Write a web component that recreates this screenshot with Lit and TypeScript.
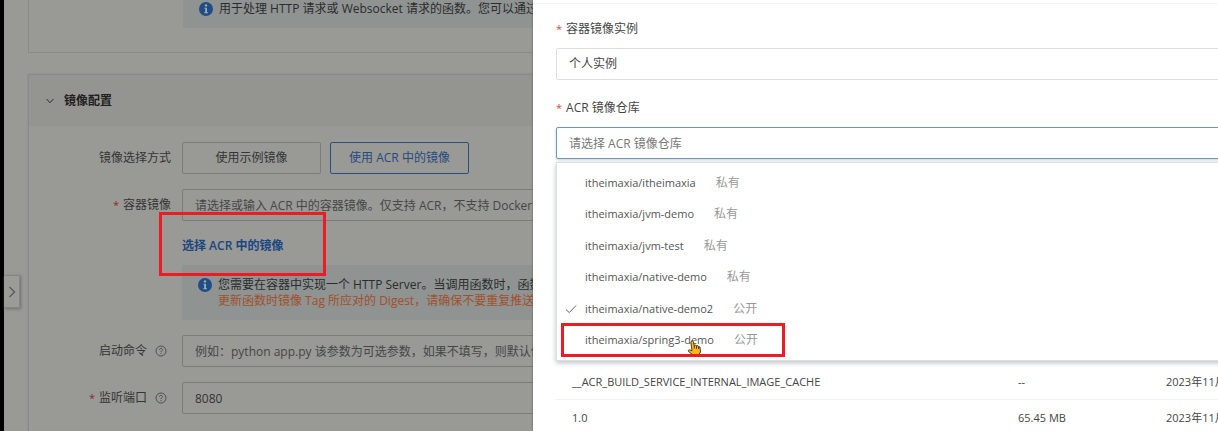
import { LitElement, html, css } from "lit";
import { customElement, state } from "lit/decorators.js";
import { classMap } from "lit/directives/class-map.js";

const infoIcon = html`<svg class="info" viewBox="0 0 14 14" aria-hidden="true">
  <circle cx="7" cy="7" r="7" fill="#1f4e86" />
  <circle cx="7" cy="3.4" r="1.2" fill="#a3a8ab" />
  <path d="M5.3 5.7H8V10.3H9V11.2H5.2V10.3H6.2V6.6H5.3Z" fill="#a3a8ab" />
</svg>`;

const helpIcon = html`<svg class="help" viewBox="0 0 12 12" aria-hidden="true">
  <circle cx="6" cy="6" r="5" fill="none" stroke="#4a4a49" stroke-width=".9" />
  <path d="M4.5 4.9C4.5 3.9 5.1 3.4 6 3.4S7.5 3.9 7.5 4.7C7.5 5.6 6 5.8 6 7" fill="none" stroke="#4a4a49" stroke-width=".9" />
  <rect x="5.5" y="7.9" width="1" height="1" fill="#4a4a49" />
</svg>`;

interface Repo {
  name: string;
  access: string;
}

@customElement("app-root")
export class AppRoot extends LitElement {
  @state() private selected = "itheimaxia/native-demo2";

  private repos: Repo[] = [
    { name: "itheimaxia/itheimaxia", access: "私有" },
    { name: "itheimaxia/jvm-demo", access: "私有" },
    { name: "itheimaxia/jvm-test", access: "私有" },
    { name: "itheimaxia/native-demo", access: "私有" },
    { name: "itheimaxia/native-demo2", access: "公开" },
    { name: "itheimaxia/spring3-demo", access: "公开" },
  ];

  private tags = [
    ["__ACR_BUILD_SERVICE_INTERNAL_IMAGE_CACHE", "--", "2023年11月"],
    ["1.0", "65.45 MB", "2023年11月"],
  ];

  static styles = css`
    :host {
      display: block;
      position: relative;
      height: 100vh;
      overflow: hidden;
      background: #999996;
      color: #333534;
      font: 12px/16px "Open Sans", "Noto Sans CJK SC", sans-serif;
    }
    * { box-sizing: border-box; }
    button, input, select { font: inherit; color: inherit; margin: 0; border-radius: 2px; }
    .page { border-left: 4px solid #000; padding-left: 24px; min-height: 100%; white-space: nowrap; }
    .card { border: 1px solid #8a8a88; border-right: 0; }
    .first { border-top: 0; padding: 0 0 24px 154px; margin-bottom: 21px; }
    .second { height: 400px; box-shadow: 0 0 2px #8a8a88; }
    .tip { display: flex; gap: 6px; padding: 12px 16px 11px; background: #8f9392; overflow: hidden; color: #2a2c2c; }
    .first .tip { padding-top: 1px; }
    .tip p { margin: 0; }
    .warn { color: #a1502a; }
    .info { width: 14px; height: 14px; margin-top: 1px; flex: none; }
    .head { display: flex; align-items: center; gap: 9px; height: 51px; padding-left: 16px; background: #949491; }
    .head h2 { margin: 0; font-size: 12px; line-height: 16px; font-weight: 700; color: #1f2020; }
    .chev { width: 10px; height: 10px; }
    .form { display: grid; grid-template-columns: 142px 1fr; column-gap: 11px; padding-top: 16px; row-gap: 15px; }
    .form label, .form .label { display: flex; justify-content: flex-end; align-items: center; height: 32px; gap: 4px; }
    .help { width: 12px; height: 12px; margin: 0 4px 0 4px; }
    .req { color: #8d2a24; font-size: 11px; }
    .form input { width: 100%; height: 32px; padding: 0 12px; background: transparent; border: 1px solid #7c7c7a; }
    .form input::placeholder { color: #454746; opacity: 1; }
    .modes { display: flex; gap: 9px; }
    .modes button { width: 139px; height: 32px; background: transparent; border: 1px solid #7c7c7a; }
    .modes .on { border-color: #2d4f80; color: #264a80; }
    .wide { grid-column: 2; }
    .link { display: block; padding: 2px 0 11px; color: #1b4680; font-weight: 600; text-decoration: none; }
    .handle {
      position: absolute; left: 4px; top: 275px; width: 16px; height: 33px; padding: 0;
      display: grid; place-items: center; background: #9b9b98; border: 1px solid #858583; border-left: 0;
      border-radius: 0; box-shadow: 1px 1px 3px #6f6f6d;
    }
    .handle svg { width: 10px; height: 12px; }
    .drawer {
      position: absolute; inset: 0 0 0 533px; overflow: hidden; background: #fff; color: #454545;
      box-shadow: 0 0 2px #555; padding-top: 3px;
    }
    .body { border-top: 1px solid #f2f2f2; padding: 17px 0 0 23px; }
    .field { display: block; }
    .field .cap { display: flex; gap: 4px; height: 16px; margin-bottom: 11px; }
    .drawer .req { color: #c8504a; }
    .field select, .field input {
      display: block; appearance: none; width: calc(100% + 8px); height: 32px; padding: 0 12px; background: #fff;
      border: 1px solid #dedede; outline: 0;
    }
    .field + .combo { margin-top: 20px; }
    .combo { position: relative; }
    .field input { border-color: #6f96bd; box-shadow: 0 1px 3px #c5d4e4; }
    .field input::placeholder { color: #777; opacity: 1; }
    .menu {
      position: absolute; top: 62px; left: 0; width: calc(100% + 8px); height: 199px; margin: 0; padding: 4px 0;
      list-style: none; display: grid; grid-template-rows: repeat(6, 1fr); background: #fff;
      border: 1px solid #dedede; box-shadow: 0 2px 5px #bcc4c4;
    }
    .menu li { display: grid; grid-template-columns: 20px auto auto; justify-content: start; align-items: center; padding-left: 8px; color: #555; }
    .name { font-size: 11px; }
    .menu .access { color: #999; margin-left: 20px; }
    .check { width: 12px; height: 12px; visibility: hidden; }
    .chosen .check { visibility: visible; }
    table { width: 100%; margin-top: 205px; border-collapse: collapse; table-layout: fixed; white-space: nowrap; font-size: 11px; }
    td { height: 35px; padding: 2px 0 0 16px; border-bottom: 1px solid #f2f2f2; }
    td:nth-child(2) { width: 148px; }
    td:nth-child(3) { width: 68px; }
    .mark { position: absolute; border: 3px solid #ed1c24; pointer-events: none; }
    .mark-link { left: 159px; top: 212px; width: 167px; height: 64px; }
    .mark-option { left: 561px; top: 323px; width: 224px; height: 34px; }
    .pointer { position: absolute; left: 687px; top: 340px; width: 15px; height: 17px; }
  `;

  render() {
    return html`
      <main class="page">
        <section class="card first">
          <div class="tip">${infoIcon}<p>用于处理 HTTP 请求或 Websocket 请求的函数。您可以通过发送请求来触发函数</p></div>
        </section>
        <section class="card second">
          <header class="head">
            <svg class="chev" viewBox="0 0 10 10" aria-hidden="true"><path d="M1.500 3L5 6.700L8.500 3" fill="none" stroke="#2b2b2b" /></svg>
            <h2>镜像配置</h2>
          </header>
          <div class="form">
            <span class="label">镜像选择方式</span>
            <div class="modes">
              <button type="button">使用示例镜像</button>
              <button type="button" class="on">使用 ACR 中的镜像</button>
            </div>
            <label for="image"><span class="req">*</span>容器镜像</label>
            <input id="image" placeholder="请选择或输入 ACR 中的容器镜像。仅支持 ACR，不支持 DockerHub" />
            <div class="wide">
              <a class="link" href="#">选择 ACR 中的镜像</a>
              <div class="tip">${infoIcon}
                <p>您需要在容器中实现一个 HTTP Server。当调用函数时，函数计算会<br /><span class="warn">更新函数时镜像 Tag 所应对的 Digest，请确保不要重复推送覆盖</span></p>
              </div>
            </div>
            <label for="command">启动命令 ${helpIcon}</label>
            <input id="command" placeholder="例如：python app.py 该参数为可选参数，如果不填写，则默认使用" />
            <label for="port"><span class="req">*</span>监听端口 ${helpIcon}</label>
            <input id="port" value="8080" />
          </div>
        </section>
      </main>
      <button class="handle" type="button" aria-label="展开">
        <svg viewBox="0 0 10 12" aria-hidden="true"><path d="M2.500 1L7.500 6L2.500 11" fill="none" stroke="#5a5a59" stroke-width="1.300" /></svg>
      </button>
      <aside class="drawer">
        <div class="body">
          <div class="field">
            <label class="cap" for="instance"><span class="req">*</span>容器镜像实例</label>
            <select id="instance"><option>个人实例</option></select>
          </div>
          <div class="field combo">
            <label class="cap" for="repo"><span class="req">*</span>ACR 镜像仓库</label>
            <input id="repo" role="combobox" aria-expanded="true" aria-controls="repos" placeholder="请选择 ACR 镜像仓库" />
            <ul class="menu" id="repos" role="listbox">
              ${this.repos.map(
                (r) => html`<li
                  role="option"
                  aria-selected=${r.name === this.selected}
                  class=${classMap({ chosen: r.name === this.selected })}
                  @click=${() => (this.selected = r.name)}
                >
                  <svg class="check" viewBox="0 0 12 12" aria-hidden="true"><path d="M1 6.500L4.300 9.600L11 2.500" fill="none" stroke="#666" /></svg>
                  <span class="name">${r.name}</span><span class="access">${r.access}</span>
                </li>`
              )}
            </ul>
          </div>
          <table>
            <tbody>
              ${this.tags.map((row) => html`<tr>${row.map((c) => html`<td>${c}</td>`)}</tr>`)}
            </tbody>
          </table>
        </div>
      </aside>
      <svg class="pointer" viewBox="0 0 15 17" aria-hidden="true">
        <path d="M4.500 1.200C5.500.6 6.300 1.200 6.500 2L7.200 5.500L8.500 5.200L9.600 5.800L10.900 5.700L11.800 6.700L13 7L13.500 12L12 14.500V16H6.500L5.500 14.500L1.500 11.500C.8 10.500 1.800 9.600 2.800 9.900L5 10.800L3.900 2.600Z" fill="#fdb714" stroke="#3d2a10" stroke-width=".9" />
        <path d="M7.300 5.500V8.500M9.500 5.900V8.800M11.600 6.700V9" stroke="#3d2a10" stroke-width=".9" />
      </svg>
      <div class="mark mark-link"></div>
      <div class="mark mark-option"></div>
    `;
  }
}
